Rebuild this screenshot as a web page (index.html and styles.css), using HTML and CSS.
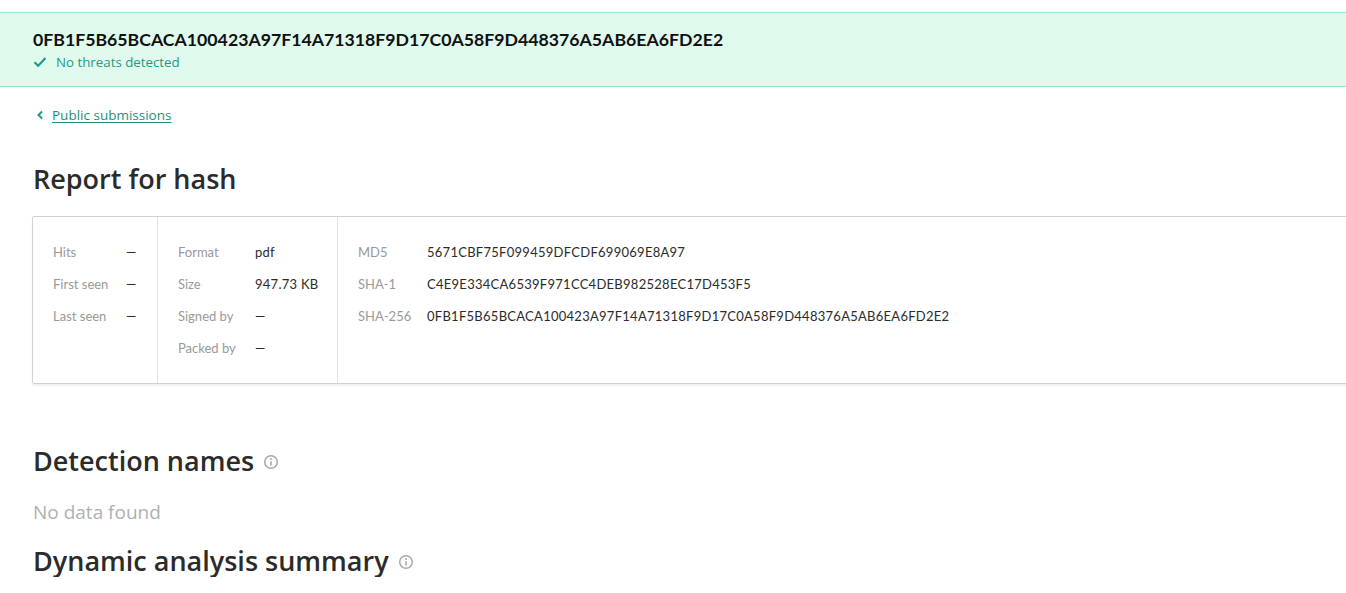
FILE: index.html
```html
<!DOCTYPE html>
<html lang="en">
<head>
<meta charset="utf-8">
<title>Report for hash</title>
<link rel="stylesheet" href="styles.css">
</head>
<body>
<div class="page">
  <header class="banner">
    <h1 class="banner-hash">0FB1F5B65BCACA100423A97F14A71318F9D17C0A58F9D448376A5AB6EA6FD2E2</h1>
    <div class="banner-status">
      <svg class="check" width="14" height="12" viewBox="0 0 14 12"><path d="M1.5 6.2 L5.2 9.8 L12.5 2" fill="none" stroke="#1a9a87" stroke-width="2"/></svg>
      <span>No threats detected</span>
    </div>
  </header>

  <main class="content">
    <nav class="back">
      <svg class="chev" width="8" height="10" viewBox="0 0 8 10"><path d="M6 1.5 L2.5 5 L6 8.5" fill="none" stroke="#1a9a87" stroke-width="2"/></svg>
      <a href="#" class="back-link">Public submissions</a>
    </nav>

    <h2 class="title">Report for hash</h2>

    <section class="card">
      <div class="col col-1">
        <div class="row"><span class="lbl">Hits</span><span class="val">—</span></div>
        <div class="row"><span class="lbl">First seen</span><span class="val">—</span></div>
        <div class="row"><span class="lbl">Last seen</span><span class="val">—</span></div>
      </div>
      <div class="col col-2">
        <div class="row"><span class="lbl">Format</span><span class="val">pdf</span></div>
        <div class="row"><span class="lbl">Size</span><span class="val">947.73 KB</span></div>
        <div class="row"><span class="lbl">Signed by</span><span class="val">—</span></div>
        <div class="row"><span class="lbl">Packed by</span><span class="val">—</span></div>
      </div>
      <div class="col col-3">
        <div class="row"><span class="lbl">MD5</span><span class="val">5671CBF75F099459DFCDF699069E8A97</span></div>
        <div class="row"><span class="lbl">SHA-1</span><span class="val">C4E9E334CA6539F971CC4DEB982528EC17D453F5</span></div>
        <div class="row"><span class="lbl">SHA-256</span><span class="val">0FB1F5B65BCACA100423A97F14A71318F9D17C0A58F9D448376A5AB6EA6FD2E2</span></div>
      </div>
    </section>

    <h2 class="section-title">Detection names
      <svg class="info" width="16" height="16" viewBox="0 0 16 16"><circle cx="8" cy="8" r="6.3" fill="none" stroke="#a8a8a8" stroke-width="1.5"/><circle cx="8" cy="5" r="1" fill="#a8a8a8"/><path d="M8 7.2 V11.5" stroke="#a8a8a8" stroke-width="1.6"/></svg>
    </h2>
    <p class="empty">No data found</p>

    <h2 class="section-title">Dynamic analysis summary
      <svg class="info" width="16" height="16" viewBox="0 0 16 16"><circle cx="8" cy="8" r="6.3" fill="none" stroke="#a8a8a8" stroke-width="1.5"/><circle cx="8" cy="5" r="1" fill="#a8a8a8"/><path d="M8 7.2 V11.5" stroke="#a8a8a8" stroke-width="1.6"/></svg>
    </h2>
  </main>
</div>
</body>
</html>
```

FILE: styles.css
```css
html, body {
  margin: 0;
  padding: 0;
  background: #ffffff;
  overflow: hidden;
}

body {
  font-family: "Open Sans", Lato, sans-serif;
  color: #2b2b2b;
}

.page {
  width: 1400px;
  padding-top: 12px;
}

.banner {
  background: #e0faee;
  border-top: 1px solid #9ee0d2;
  border-bottom: 1px solid #9ee0d2;
  padding: 16px 33px 15px;
}

.banner-hash {
  margin: 0;
  font-family: Lato, sans-serif;
  font-size: 17.7px;
  font-weight: 700;
  line-height: 22px;
  color: #111;
}

.banner-status {
  display: flex;
  align-items: center;
  gap: 9px;
  margin-top: 2px;
  color: #1a9a87;
  font-size: 13.3px;
  line-height: 18px;
}

.content {
  padding: 0 0 0 33px;
}

.back {
  display: flex;
  align-items: center;
  gap: 8px;
  margin-top: 19px;
  padding-left: 3px;
  font-size: 13.5px;
  line-height: 18px;
}

.back-link {
  color: #1d8f80;
  text-decoration: underline;
  text-underline-offset: 2px;
}

.title {
  margin: 39px 0 0;
  font-size: 27px;
  font-weight: 600;
  line-height: 32px;
  color: #2b2b2b;
}

.card {
  display: flex;
  margin-top: 21px;
  margin-left: -1px;
  border: 1px solid #d2d2d2;
  border-radius: 2px;
  box-shadow: 0 2px 2px rgba(0,0,0,0.06);
  height: 166px;
  font-family: Lato, sans-serif;
}

.col {
  padding: 25px 20px 0;
  display: flex;
  flex-direction: column;
}

.col + .col {
  border-left: 1px solid #e2e2e2;
}

.col-1 { width: 84px; }
.col-2 { width: 139px; }

.row {
  display: flex;
  height: 32px;
  align-items: flex-start;
  font-size: 13px;
  line-height: 20px;
  white-space: nowrap;
}

.lbl {
  color: #999;
  flex: none;
}

.val {
  color: #2b2b2b;
  letter-spacing: 0.27px;
}

.col-1 .lbl { width: 73px; }
.col-2 .lbl { width: 77px; }
.col-3 .lbl { width: 69px; }

.section-title {
  margin: 61px 0 0;
  font-size: 27px;
  font-weight: 600;
  line-height: 32px;
  color: #2b2b2b;
  display: flex;
  align-items: center;
  gap: 9px;
}

.info {
  margin-top: 2px;
}

.empty {
  margin: 23px 0 0;
  font-size: 19px;
  line-height: 24px;
  color: #b0b0b0;
}

.empty + .section-title {
  margin-top: 21px;
}
```
